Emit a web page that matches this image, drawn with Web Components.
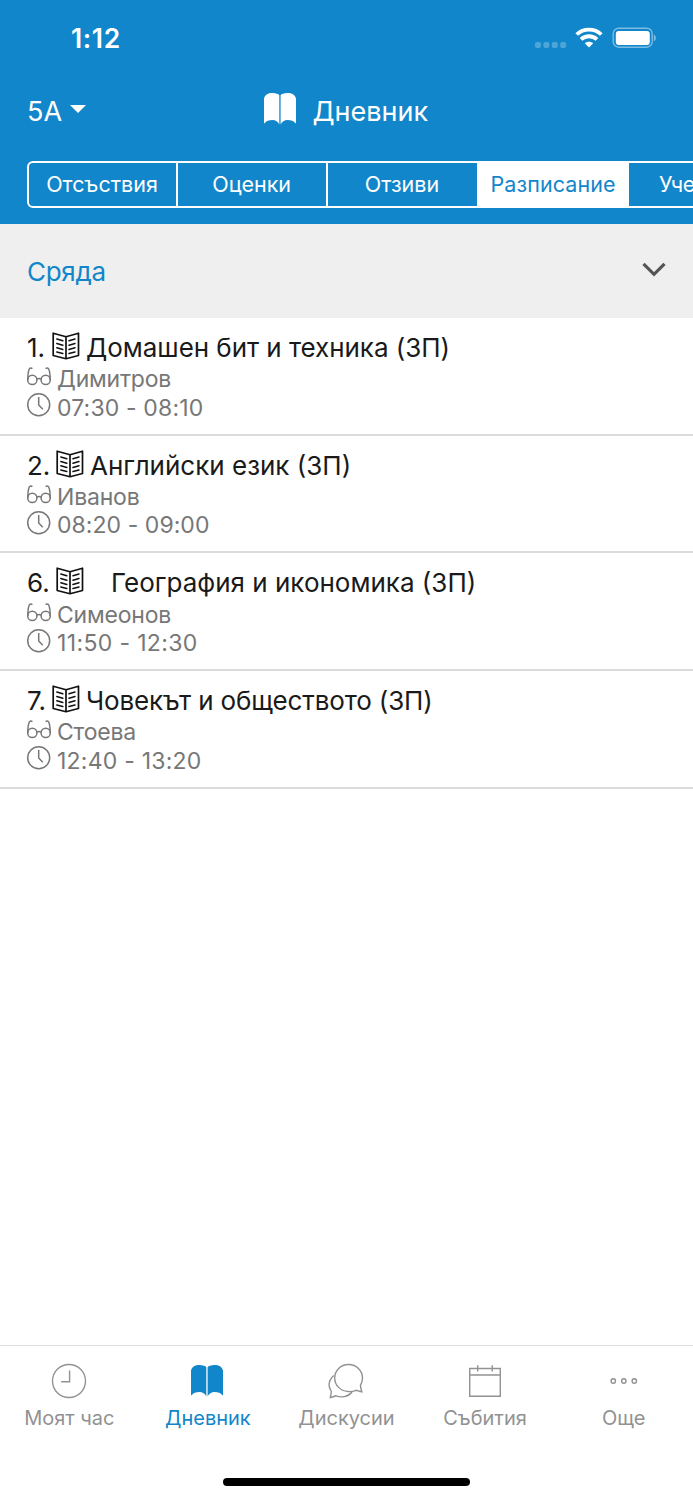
<!DOCTYPE html>
<html lang="bg">
<head>
<meta charset="utf-8">
<title>Дневник</title>
<style>
  html, body { margin: 0; height: 100%; }
  body {
    --blue: #1286ca;
    font-family: Inter, "Liberation Sans", sans-serif;
    background: #fff;
    overflow: hidden;
  }
</style>
</head>
<body>
<diary-app></diary-app>

<script>
const ICONS = {
  bookmark: `<svg width="32" height="32" viewBox="0 0 32 32" fill="currentColor"><path d="M0 5.500C1 1.800 4 0 8.500 0 12 0 14.500 1 15.300 2.200V31.500C14 28.500 11.500 27 8.500 27 5 27 2 28 .7 30.200 0 30.500 0 30 0 29.500Z"/><path d="M32 5.500C31 1.800 28 0 23.500 0 20 0 17.500 1 16.600 2.200V31.500C18 28.500 20.500 27 23.500 27 27 27 30 28 31.300 30.200 32 30.500 32 30 32 29.500Z"/></svg>`,
  book: `<svg width="28" height="28" viewBox="0 0 28 28" fill="none" stroke="#111" stroke-width="1.7" stroke-linejoin="round"><path d="M1.200 1.200 14 4.800 26.500 1.200V23.500L14 26.700 1.200 23.500ZM14 4.800V26.700"/><path stroke-width="1.500" stroke-linecap="round" d="M4.800 7 10.800 8.800M4.800 11.500 10.800 13.200M4.800 15.800 10.800 17.500M4.800 20 10.800 21.500M23 7 17 8.800M23 11.500 17 13.200M23 15.800 17 17.500M23 20 17 21.500"/></svg>`,
  glasses: `<svg width="24" height="20" viewBox="0 0 24 20" fill="none" stroke="currentColor" stroke-width="1.500"><circle cx="5.300" cy="12.900" r="4.600"/><circle cx="18.700" cy="12.900" r="4.600"/><path d="M9.700 12.200Q12 10.800 14.200 12.200M.8 13C.8 9 1.400 4 2.300 2 2.900.8 4.200.7 5.400 1.600M23.200 13C23.200 9 22.600 4 21.700 2 21.100.8 19.800.7 18.600 1.600"/></svg>`,
  clock: `<svg width="24" height="24" viewBox="0 0 24 24" fill="none" stroke="currentColor" stroke-width="1.500"><circle cx="11.700" cy="11.800" r="11"/><path d="M11.700 4V12L15.800 16.300"/></svg>`,
  chevron: `<svg width="24" height="16" viewBox="0 0 24 16" fill="none" stroke="#555" stroke-width="3.200"><path d="M1.500 1.800 12 12.300 22.500 1.800"/></svg>`,
  hour: `<svg width="36" height="36" viewBox="0 0 36 36" fill="none" stroke="currentColor" stroke-width="1.400"><circle cx="18" cy="18" r="16.500"/><path d="M18.600 7.500V18.800H10.200"/></svg>`,
  chat: `<svg width="36" height="36" viewBox="0 0 36 36" fill="none" stroke="currentColor" stroke-width="1.400"><path d="M33.900 28.800C31 28.500 29.500 27.300 28 27.300 25.500 28.400 22.500 28.800 20 28.500 12 27.800 6.700 22 6.700 15 6.700 7.500 12.700 1.500 20.500 1.500S34.500 7.500 34.500 15C34.500 18 33.500 20.500 32.500 22 32.300 24.500 33.300 27 33.900 28.800Z"/><path d="M5.700 12.500C2 16 .6 20 1.300 23.500 1.800 26 2.800 27.200 3.300 28.500 3.200 31 2.700 33 2.300 34.500 4.500 34.300 6.200 33.200 8 32.800 13 34.800 20 34.300 24 29"/></svg>`,
  calendar: `<svg width="36" height="36" viewBox="0 0 36 36" fill="none" stroke="currentColor" stroke-width="1.400"><path d="M2.700 5.500H33.300V33.300H2.700ZM2.700 12H33.300M10.700 2.300V8.600M25.200 2.300V8.600"/></svg>`,
  more: `<svg width="36" height="36" viewBox="0 0 36 36" fill="none" stroke="currentColor" stroke-width="1.400"><circle cx="7.300" cy="18" r="2.200"/><circle cx="17.800" cy="18" r="2.200"/><circle cx="28.300" cy="18" r="2.200"/></svg>`,
};

class UiIcon extends HTMLElement {
  constructor() {
    super();
    this.attachShadow({ mode: 'open' });
  }

  connectedCallback() {
    this.shadowRoot.innerHTML = `
      <style>:host { display: block; flex: none; white-space: normal; } svg { display: block; }</style>
      ${ICONS[this.getAttribute('name')]}
    `;
  }
}

class StatusBar extends HTMLElement {
  constructor() {
    super();
    this.attachShadow({ mode: 'open' });
    this.shadowRoot.innerHTML = `
      <style>
        :host { display: flex; justify-content: space-between; height: 76px; padding: 0 36px 0 71px; box-sizing: border-box; }
        .time { font-size: 26.500px; font-weight: 600; line-height: 32px; margin-top: 22px; letter-spacing: .6px; }
        .signals { display: flex; align-items: flex-start; padding-top: 27px; }
        svg { display: block; }
        .dots { margin: 15px 8px 0 0; }
        .wifi { margin-right: 9px; }
      </style>
      <span class="time"><slot></slot></span>
      <div class="signals">
        <svg class="dots" width="32" height="6" fill="#fff" fill-opacity=".25"><rect width="6" height="6" rx="2"/><rect x="8.400" width="6" height="6" rx="2"/><rect x="16.800" width="6" height="6" rx="2"/><rect x="25.200" width="6" height="6" rx="2"/></svg>
        <svg class="wifi" width="28" height="21" viewBox="0 0 28 21"><g fill="none" stroke="#fff" stroke-width="3.800"><path d="M1.700 7.500C8.500 .9 19.500 .9 26.300 7.500"/><path d="M6 12.300C10.500 8.200 17.500 8.200 22 12.300"/></g><path fill="#fff" d="M14 20.600 9.800 16.200C12.200 14.200 15.800 14.200 18.200 16.200Z"/></svg>
        <svg width="45" height="22" viewBox="0 0 45 22"><rect x="1.200" y="1.200" width="39" height="19" rx="5.500" fill="none" stroke="#fff" stroke-opacity=".45" stroke-width="1.400"/><rect x="3.800" y="3.900" width="34" height="14" rx="3" fill="#fff"/><path d="M41.800 7.500C44.600 8.700 44.600 13.200 41.800 14.400Z" fill="#fff" fill-opacity=".45"/></svg>
      </div>
    `;
  }
}

class NavHeader extends HTMLElement {
  constructor() {
    super();
    this.attachShadow({ mode: 'open' });
    this.shadowRoot.innerHTML = `
      <style>
        :host { display: grid; grid-template-columns: 1fr auto 1fr; height: 85px; padding: 0 28px 0 27px; font-size: 27px; line-height: 34px; }
        .group { display: flex; align-items: center; gap: 8px; height: 34px; margin-top: 19px; }
        .caret { width: 0; border: 8px solid transparent; border-top-color: #fff; border-bottom: 0; margin-top: -6px; }
        .title { display: flex; gap: 16.500px; margin-top: 17px; }
        .title span { margin-top: 2px; }
      </style>
      <div class="group"><slot name="class"></slot><i class="caret"></i></div>
      <div class="title"><ui-icon name="bookmark"></ui-icon><span><slot></slot></span></div>
    `;
  }
}

class SegmentBar extends HTMLElement {
  constructor() {
    super();
    this.attachShadow({ mode: 'open' });
    this.shadowRoot.innerHTML = `
      <style>
        :host { display: block; padding-left: 27px; overflow: hidden; }
        .bar { display: flex; width: 755px; height: 47px; box-sizing: border-box; border: 2px solid #fff; border-radius: 6px; }
        ::slotted(span) {
          flex: none; width: 150.300px; box-sizing: border-box; border-left: 2px solid #fff; padding-right: 1px;
          text-align: center; font-size: 21.500px; line-height: 43px;
        }
        ::slotted(span:first-child) { border-left: 0; width: 147px; }
        ::slotted(.on) { background: #fff; color: var(--blue); width: 152px; letter-spacing: .1px; }
        ::slotted(span:last-child) { border-left: 0; padding-left: 30.500px; text-align: left; letter-spacing: -.4px; }
      </style>
      <div class="bar"><slot></slot></div>
    `;
  }
}

class DayHeader extends HTMLElement {
  constructor() {
    super();
    this.attachShadow({ mode: 'open' });
    this.shadowRoot.innerHTML = `
      <style>
        :host {
          display: flex; justify-content: space-between; align-items: center; height: 94px; box-sizing: border-box;
          padding: 0 27px; background: #efefef; color: var(--blue); font-size: 26px; letter-spacing: -.3px;
        }
        ui-icon { margin-bottom: 2px; }
      </style>
      <span><slot></slot></span><ui-icon name="chevron"></ui-icon>
    `;
  }
}

class LessonRow extends HTMLElement {
  constructor() {
    super();
    this.attachShadow({ mode: 'open' });
  }

  connectedCallback() {
    const attr = (name) => this.getAttribute(name);
    this.shadowRoot.innerHTML = `
      <style>
        :host { display: block; height: 117.670px; box-sizing: border-box; padding: 14px 27px 0; border-bottom: 2px solid #dcdcde; color: #777; }
        .title { display: flex; height: 32.300px; line-height: 32.700px; font-size: 26px; color: #1a1a1a; }
        .num { width: var(--num, 25px); }
        .name { margin-left: var(--gap, 6px); letter-spacing: var(--track, 0); white-space: nowrap; }
        .line { display: flex; gap: 6px; height: 28.500px; line-height: 30px; font-size: 23px; }
        .line ui-icon { width: 24px; }
        .who { letter-spacing: -.2px; }
        .who ui-icon { margin-top: 3px; }
        .time { letter-spacing: var(--time-track, .15px); }
        .time ui-icon { margin-top: .5px; }
      </style>
      <div class="title"><span class="num">${attr('num')}</span><ui-icon name="book"></ui-icon><span class="name"><slot></slot></span></div>
      <div class="line who"><ui-icon name="glasses"></ui-icon><span>${attr('teacher')}</span></div>
      <div class="line time"><ui-icon name="clock"></ui-icon><span>${attr('time')}</span></div>
    `;
  }
}

class TabItem extends HTMLElement {
  constructor() {
    super();
    this.attachShadow({ mode: 'open' });
  }

  connectedCallback() {
    this.shadowRoot.innerHTML = `
      <style>
        :host { display: flex; flex: 1; flex-direction: column; align-items: center; color: #929292; font-size: 20px; line-height: 26px; }
        :host([active]) { color: var(--blue); }
        .icon { display: flex; justify-content: center; height: 36px; margin: 17px 0 6px; }
        :host([active]) ui-icon { margin: 2px 1px 0 0; }
      </style>
      <div class="icon"><ui-icon name="${this.getAttribute('icon')}"></ui-icon></div>
      <span><slot></slot></span>
    `;
  }
}

class TabBar extends HTMLElement {
  constructor() {
    super();
    this.attachShadow({ mode: 'open' });
    this.shadowRoot.innerHTML = `
      <style>
        :host { display: flex; flex-direction: column; height: 155px; box-sizing: border-box; border-top: 1.500px solid #dedede; background: #fff; }
        .tabs { display: flex; flex: 1; }
        .home { width: 247px; height: 8px; margin: 0 auto 14px; border-radius: 4px; background: #000; }
      </style>
      <div class="tabs"><slot></slot></div>
      <div class="home"></div>
    `;
  }
}

class DiaryApp extends HTMLElement {
  constructor() {
    super();
    this.attachShadow({ mode: 'open' });
    this.shadowRoot.innerHTML = `
      <style>
        :host { display: flex; flex-direction: column; width: 693px; height: 1500px; overflow: hidden; }
        header { height: 224px; flex: none; background: var(--blue); color: #fff; }
        main { flex: 1; }
      </style>
      <header>
        <status-bar>1:12</status-bar>
        <nav-header><span slot="class">5А</span>Дневник</nav-header>
        <segment-bar>
          <span>Отсъствия</span><span>Оценки</span><span>Отзиви</span><span class="on">Разписание</span><span>Уче</span>
        </segment-bar>
      </header>
      <main>
        <day-header>Сряда</day-header>
        <lesson-row num="1." teacher="Димитров" time="07:30 - 08:10" style="--track:-.05px">Домашен бит и техника (ЗП)</lesson-row>
        <lesson-row num="2." teacher="Иванов" time="08:20 - 09:00" style="--num:29px;--time-track:.05px">Английски език (ЗП)</lesson-row>
        <lesson-row num="6." teacher="Симеонов" time="11:50 - 12:30" style="--num:29px;--gap:27px;--time-track:.35px">География и икономика (ЗП)</lesson-row>
        <lesson-row num="7." teacher="Стоева" time="12:40 - 13:20" style="--track:-.15px;--time-track:.22px">Човекът и обществото (ЗП)</lesson-row>
      </main>
      <tab-bar>
        <tab-item icon="hour">Моят час</tab-item>
        <tab-item icon="bookmark" active>Дневник</tab-item>
        <tab-item icon="chat">Дискусии</tab-item>
        <tab-item icon="calendar">Събития</tab-item>
        <tab-item icon="more">Още</tab-item>
      </tab-bar>
    `;
  }
}

customElements.define('ui-icon', UiIcon);
customElements.define('status-bar', StatusBar);
customElements.define('nav-header', NavHeader);
customElements.define('segment-bar', SegmentBar);
customElements.define('day-header', DayHeader);
customElements.define('lesson-row', LessonRow);
customElements.define('tab-item', TabItem);
customElements.define('tab-bar', TabBar);
customElements.define('diary-app', DiaryApp);
</script>
</body>
</html>
